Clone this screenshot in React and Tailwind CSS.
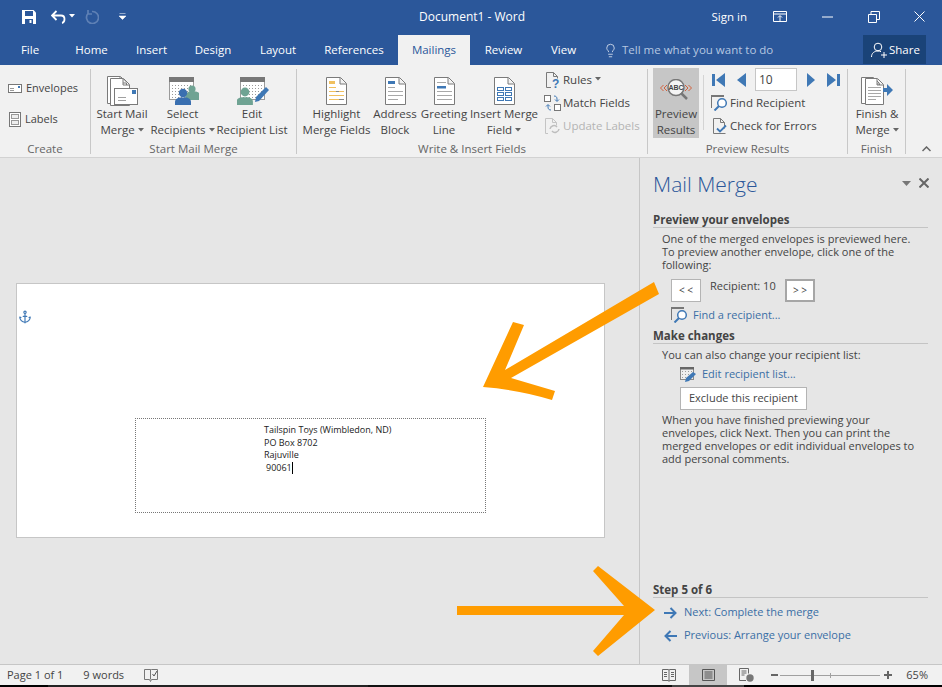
import React from "react";
import { Anchor, Lightbulb } from "lucide-react";

const tabs = [
  ["File", "w-[60px]"],
  ["Home", "w-[63px]"],
  ["Insert", "w-[57px]"],
  ["Design", "w-[66px]"],
  ["Layout", "w-[64px]"],
  ["References", "w-[88px]"],
];

function Caret({ color = "#666" }) {
  return (
    <svg width="6" height="4" viewBox="0 0 6 4" className="inline-block ml-[3px] mb-[2px]">
      <path d="M0 0h6L3 3.5z" fill={color} />
    </svg>
  );
}

// page outline with a folded corner, shared by most ribbon icons
function Page({ x = 0, y = 0, w = 20, h = 27, stroke = "#7a7a7a", fill = "#fff" }) {
  return (
    <path
      d={`M${x + 0.5} ${y + 0.5}h${w - 7}l6 6v${h - 7}h-${w - 1}z M${x + w - 7} ${y + 1}v6h6`}
      fill={fill}
      stroke={stroke}
    />
  );
}

function Dots({ x, y, cols, rows }) {
  const out = [];
  for (let r = 0; r < rows; r++) {
    for (let c = 0; c < cols; c++) {
      out.push(<rect key={r + "-" + c} x={x + c * 3} y={y + r * 3} width="1" height="1" fill="#9a9a9a" />);
    }
  }
  return out;
}

function Person({ x, y, color, s = 1 }) {
  return (
    <g fill={color}>
      <circle cx={x} cy={y} r={4.2 * s} />
      <path d={`M${x - 8 * s} ${y + 13 * s}v-4c0-3 3-4.500 5-4.500h${6 * s}c2 0 5 1.500 5 4.500v4z`} />
    </g>
  );
}

const StartMailIcon = () => (
  <svg width="31" height="30" viewBox="0 0 31 30">
    <Page x={0} y={0} w={20} h={28} />
    <Page x={3} y={2} w={20} h={28} />
    <rect x="7.500" y="12.500" width="23" height="16" fill="#fff" stroke="#7a7a7a" />
    <rect x="25" y="14" width="4" height="4" fill="#3f78b5" />
    <path d="M11 21.500h8M11 24.500h8" stroke="#a0a0a0" />
  </svg>
);

const SelectIcon = () => (
  <svg width="30" height="28" viewBox="0 0 30 28" className="ml-[3px]">
    <rect x="0.500" y="0.500" width="24" height="22" fill="#fff" stroke="#9a9a9a" />
    <rect x="0" y="0" width="25" height="5" fill="#777" />
    <Dots x={3} y={8} cols={7} rows={5} />
    <Person x={23} y={12} color="#6fa393" s={0.85} />
    <Person x={14} y={16} color="#3a6fb0" />
  </svg>
);

const EditListIcon = () => (
  <svg width="33" height="28" viewBox="0 0 33 28" className="ml-[2px]">
    <rect x="3.500" y="0.500" width="24" height="22" fill="#fff" stroke="#9a9a9a" />
    <rect x="3" y="0" width="25" height="5" fill="#777" />
    <Dots x={6} y={8} cols={7} rows={5} />
    <Person x={8} y={15} color="#6fa393" s={1.05} />
    <path d="M18 25l1-5L29 10l3 3L22 24z" fill="#3f78b5" />
  </svg>
);

const HighlightIcon = () => (
  <svg width="21" height="28" viewBox="0 0 21 28">
    <Page w={21} h={28} />
    <rect x="3" y="4" width="6" height="3" fill="#f0c060" />
    <path d="M3 10.500h7" stroke="#f0c060" />
    <path d="M3 14.500h5M8 14.500h10" stroke="#f0c060" />
    <path d="M3 18.500h15" stroke="#f0c060" />
    <path d="M3 22.500h10" stroke="#f0c060" />
    <path d="M13 22.500h5M10 14.500h3" stroke="#888" />
  </svg>
);

const AddressIcon = () => (
  <svg width="21" height="28" viewBox="0 0 21 28">
    <Page w={21} h={28} />
    <rect x="3" y="4" width="7" height="3" fill="#3f78b5" />
    <path d="M3 10.500h7M3 14.500h15M3 18.500h15M3 22.500h10" stroke="#a8a8a8" />
  </svg>
);

const GreetingIcon = () => (
  <svg width="21" height="28" viewBox="0 0 21 28">
    <Page w={21} h={28} />
    <path d="M3 5.500h9M3 14.500h15M3 18.500h15M3 22.500h15" stroke="#a8a8a8" />
    <rect x="3" y="9" width="9" height="2.500" fill="#3f78b5" />
  </svg>
);

const InsertFieldIcon = () => (
  <svg width="21" height="28" viewBox="0 0 21 28">
    <Page w={21} h={28} />
    <g fill="none" stroke="#3f78b5">
      <rect x="3.500" y="10.500" width="6" height="3" />
      <rect x="11.500" y="10.500" width="6" height="3" />
      <rect x="3.500" y="15.500" width="6" height="3" />
      <rect x="11.500" y="15.500" width="6" height="3" />
      <rect x="3.500" y="20.500" width="6" height="3" />
      <rect x="11.500" y="20.500" width="6" height="3" />
    </g>
  </svg>
);

const RulesIcon = () => (
  <svg width="14" height="16" viewBox="0 0 14 16">
    <path d="M5 15.500H0.500V0.500h7l4 4v2M7.500 0.500v4h4" fill="none" stroke="#7a7a7a" />
    <text x="6" y="15.500" fontSize="12" fontWeight="700" fill="#3f78b5" fontFamily="Liberation Sans">?</text>
  </svg>
);

const MatchIcon = () => (
  <svg width="17" height="16" viewBox="0 0 17 16">
    <rect x="0.500" y="0.500" width="6" height="6" fill="#fff" stroke="#777" />
    <rect x="10.500" y="9.500" width="6" height="6" fill="#fff" stroke="#777" />
    <path d="M10 1c2 0 3 1 3 3v2M11 4.500l2 2 2-2" fill="none" stroke="#3f78b5" />
    <path d="M7 15c-2 0-3-1-3-3v-2M2 11.500l2-2 2 2" fill="none" stroke="#3f78b5" />
  </svg>
);

const UpdateIcon = () => (
  <svg width="16" height="16" viewBox="0 0 16 16">
    <path d="M3 15.500H0.500V0.500h7l4 4v3M7.500 0.500v4h4" fill="none" stroke="#c4c4c4" />
    <path d="M5 11a4 4 0 0 1 7-2M14 11a4 4 0 0 1-7 2" fill="none" stroke="#bdbdbd" strokeWidth="1.500" />
  </svg>
);

const PreviewIcon = () => (
  <svg width="32" height="22" viewBox="0 0 32 22">
    <circle cx="16" cy="8.500" r="8" fill="#f4f4f4" stroke="#777" strokeWidth="1.500" />
    <path d="M21 14l6 6" stroke="#777" strokeWidth="2.500" />
    <text x="16" y="11" textAnchor="middle" fontSize="7" fontWeight="700" fill="#444" fontFamily="Liberation Sans">ABC</text>
    <path d="M3.500 6l-3 3 3 3M7 6L4 9l3 3M25 6l3 3-3 3M28.500 6l3 3-3 3" fill="none" stroke="#d2603c" />
  </svg>
);

const FindIcon = () => (
  <svg width="17" height="16" viewBox="0 0 17 16">
    <path d="M0.500 13V1.500h12" fill="none" stroke="#777" />
    <rect x="0" y="0" width="13" height="2" fill="#777" />
    <circle cx="11" cy="8" r="4.300" fill="#fff" stroke="#3f78b5" strokeWidth="1.500" />
    <path d="M8 11l-4.500 4.500" stroke="#3f78b5" strokeWidth="2" />
  </svg>
);

const CheckIcon = () => (
  <svg width="15" height="16" viewBox="0 0 15 16">
    <path d="M0.500 15.500V0.500h7l4 4v6M7.500 0.500v4h4M0.500 15.500h12" fill="none" stroke="#7a7a7a" />
    <path d="M4 10.500l3 3 6-6" fill="none" stroke="#3f78b5" strokeWidth="1.800" />
  </svg>
);

const FinishIcon = () => (
  <svg width="32" height="28" viewBox="0 0 32 28">
    <Page x={0} y={0} w={19} h={27} />
    <Page x={4} y={1} w={19} h={27} />
    <path d="M7 10.500h13M7 13.500h13M7 16.500h13M7 19.500h13M7 22.500h8" stroke="#a8a8a8" />
    <path d="M22 11h4V7l6 6-6 6v-4h-4z" fill="#3f78b5" />
  </svg>
);

const EditSmallIcon = () => (
  <svg width="17" height="15" viewBox="0 0 17 15">
    <rect x="0.500" y="0.500" width="13" height="12" fill="#eee" stroke="#8a8a8a" />
    <rect x="0" y="0" width="14" height="2.500" fill="#666" />
    <Dots x={2} y={4} cols={4} rows={3} />
    <path d="M5 15l1-4 7-6 3 2-7 7z" fill="#3f78b5" />
  </svg>
);

const PaneArrow = ({ back }) => (
  <svg width="13" height="12" viewBox="0 0 13 12" className={back ? "rotate-180" : ""}>
    <path d="M0 6h11M6.500 1L11.500 6 6.500 11" fill="none" stroke="#3f78b5" strokeWidth="2" />
  </svg>
);

function LargeButton({ icon, line1, line2, caret, width, active, top = "pt-[7px]" }) {
  return (
    <div className={`${width} shrink-0 h-[70px] flex flex-col items-center ${top} ${active ? "bg-[#c6c6c6]" : ""}`}>
      <div className="h-[32px] flex items-center justify-center">{icon}</div>
      <div className="mt-auto text-center leading-[16px] whitespace-nowrap">
        <div>{line1}</div>
        <div>
          {line2}
          {caret && <Caret />}
        </div>
      </div>
    </div>
  );
}

function SmallRow({ icon, label, caret, disabled }) {
  return (
    <div className={`h-[23px] flex items-center whitespace-nowrap ${disabled ? "text-[#b4b4b4]" : ""}`}>
      <div className="w-[19px] flex justify-center shrink-0">{icon}</div>
      <span className="ml-[1px]">{label}</span>
      {caret && <Caret />}
    </div>
  );
}

function Group({ label, width, children }) {
  return (
    <div className={`${width} shrink-0 h-[85px] flex flex-col border-r border-[#c8c8c8]`}>
      <div className="flex-1 flex -mt-[1px]">{children}</div>
      <div className="text-center text-[#666] leading-[14px] h-[13px] -mb-[1px] whitespace-nowrap">{label}</div>
    </div>
  );
}

function SectionHead({ children, className = "" }) {
  return (
    <div className={`h-[16px] leading-[15px] border-b border-[#c4c4c4] font-bold text-[#444] text-[11.500px] ${className}`}>
      {children}
    </div>
  );
}

function PaneText({ children, className = "" }) {
  return <div className={`pl-[9px] leading-[13px] text-[#444] ${className}`}>{children}</div>;
}

function NavTriangle({ d, w }) {
  return (
    <svg width={w} height="14" viewBox={`0 0 ${w} 14`} className="shrink-0">
      <path d={d} fill="#3f78b5" />
    </svg>
  );
}

function TitleBar() {
  return (
    <div className="h-[35px] pb-[2px] flex items-center text-white relative shrink-0">
      <div className="flex items-center pl-[22px] gap-[15px]">
        <svg width="14" height="14" viewBox="0 0 14 14">
          <path d="M0 0h11.500L14 2.500V14H0z" fill="#fff" />
          <rect x="3" y="1" width="8" height="5" fill="#2b579a" />
          <rect x="3" y="9" width="8" height="5" fill="#2b579a" />
          <rect x="7.500" y="10" width="2" height="3" fill="#fff" />
        </svg>
        <div className="flex items-center">
          <svg width="15" height="14" viewBox="0 0 15 14">
            <path d="M5.500 1L1 5.500 5.500 10M1.500 5.500H10c5 0 4 7 1 7.500" fill="none" stroke="#fff" strokeWidth="1.800" />
          </svg>
          <Caret color="#fff" />
        </div>
        <svg width="14" height="14" viewBox="0 0 14 14" className="-ml-[5px]">
          <path d="M3 3.500a6 6 0 1 0 4-2M3 0v4h4" fill="none" stroke="#5f81b5" strokeWidth="1.700" />
        </svg>
        <svg width="7" height="7" viewBox="0 0 7 7" className="ml-[5px]">
          <path d="M0.500 0.500h6M0 3h7L3.500 6.500z" fill="#fff" stroke="#fff" strokeWidth="0.500" />
        </svg>
      </div>
      <div className="absolute left-[419px] text-[12px] whitespace-nowrap">Document1 - Word</div>
      <div className="ml-auto flex items-center">
        <span className="text-[11.500px] mr-[26px]">Sign in</span>
        <svg width="14" height="12" viewBox="0 0 14 12" className="mr-[35px]">
          <path d="M0.500 0.500h13v10h-13zM0.500 3h13M7 10V5M5 6.500l2-2 2 2" fill="none" stroke="#fff" />
        </svg>
        <svg width="11" height="2" viewBox="0 0 11 2" className="mr-[35px]">
          <path d="M0 1h11" stroke="#fff" />
        </svg>
        <svg width="12" height="12" viewBox="0 0 12 12" className="mr-[34px]">
          <path d="M0.500 3.500h8v8h-8zM3 3V0.500h8.500v8H9" fill="none" stroke="#fff" />
        </svg>
        <svg width="11" height="11" viewBox="0 0 11 11" className="mr-[17px]">
          <path d="M0.500 0.500l10 10M10.500 0.500l-10 10" stroke="#fff" />
        </svg>
      </div>
    </div>
  );
}

function TabRow() {
  return (
    <div className="h-[30px] flex text-white shrink-0 text-[11.500px]">
      {tabs.map(([name, w]) => (
        <div key={name} className={`${w} flex items-center justify-center`}>{name}</div>
      ))}
      <div className="w-[72px] bg-[#f1f1f1] text-[#2b579a] flex items-center justify-center">Mailings</div>
      <div className="w-[67px] flex items-center justify-center">Review</div>
      <div className="w-[53px] flex items-center justify-center">View</div>
      <div className="flex items-center ml-[13px] text-[#b6c7e1]">
        <Lightbulb size={15} strokeWidth={1.300} color="#dfe6f1" />
        <span className="ml-[4px]">Tell me what you want to do</span>
      </div>
      <div className="ml-auto mr-[16px] w-[63px] h-[29px] bg-[#1a4378] flex items-center pl-[8px]">
        <svg width="16" height="16" viewBox="0 0 16 16">
          <circle cx="7" cy="5" r="3.800" fill="none" stroke="#fff" />
          <path d="M0.500 15c0-4 3-6 6.500-6 1 0 2 .2 3 .7M10 13h6M13 10v6" fill="none" stroke="#fff" />
        </svg>
        <span className="ml-[2px]">Share</span>
      </div>
    </div>
  );
}

function Ribbon() {
  return (
    <div className="h-[93px] bg-[#f1f1f1] border-b border-[#d2d2d2] pt-[4px] flex shrink-0 text-[11.500px] text-[#444] relative">
      <Group label="Create" width="w-[91px]">
        <div className="flex flex-col pt-[9px] pl-[8px] gap-[8px]">
          <div className="h-[23px] flex items-center">
            <svg width="14" height="10" viewBox="0 0 14 10">
              <rect x="0.500" y="0.500" width="13" height="8" fill="#fff" stroke="#777" />
              <rect x="10" y="2" width="2" height="2" fill="#3f78b5" />
              <path d="M2 4.500h4M2 6.500h4" stroke="#999" />
            </svg>
            <span className="ml-[4px] text-[11px]">Envelopes</span>
          </div>
          <div className="h-[23px] flex items-center">
            <svg width="12" height="15" viewBox="0 0 12 15" className="ml-[1px]">
              <rect x="0.500" y="0.500" width="11" height="14" fill="#fff" stroke="#777" />
              <rect x="2.500" y="2.500" width="7" height="4" fill="#eee" stroke="#999" />
              <rect x="2.500" y="8.500" width="7" height="4" fill="#eee" stroke="#999" />
            </svg>
            <span className="ml-[4px] text-[11px]">Labels</span>
          </div>
        </div>
      </Group>
      <Group label="Start Mail Merge" width="w-[206px]">
        <div className="flex pl-[2px]">
          <LargeButton icon={<StartMailIcon />} line1="Start Mail" line2="Merge" caret width="w-[58px]" />
          <LargeButton icon={<SelectIcon />} line1="Select" line2="Recipients" caret width="w-[63px]" />
          <LargeButton icon={<EditListIcon />} line1="Edit" line2="Recipient List" width="w-[76px]" />
        </div>
      </Group>
      <Group label="Write & Insert Fields" width="w-[351px]">
        <div className="flex pl-[5px]">
          <LargeButton icon={<HighlightIcon />} line1="Highlight" line2="Merge Fields" width="w-[69px]" />
          <LargeButton icon={<AddressIcon />} line1="Address" line2="Block" width="w-[48px]" />
          <LargeButton icon={<GreetingIcon />} line1="Greeting" line2="Line" width="w-[50px]" />
          <LargeButton icon={<InsertFieldIcon />} line1="Insert Merge" line2="Field" caret width="w-[70px]" />
          <div className="flex flex-col pl-[4px]">
            <SmallRow icon={<RulesIcon />} label="Rules" caret />
            <SmallRow icon={<MatchIcon />} label="Match Fields" />
            <SmallRow icon={<UpdateIcon />} label="Update Labels" disabled />
          </div>
        </div>
      </Group>
      <Group label="Preview Results" width="w-[200px]">
        <div className="flex pl-[5px]">
          <LargeButton icon={<PreviewIcon />} line1="Preview" line2="Results" width="w-[46px]" active top="pt-[6px]" />
          <div className="w-px h-[55px] bg-[#d4d4d4] ml-[4px] mt-[7px]" />
          <div className="flex flex-col ml-[7px]">
            <div className="h-[23px] flex items-center ml-[1px]">
              <NavTriangle w={13} d="M0 1h3v12H0zM13 0v14L4 7z" />
              <div className="w-[12px]" />
              <NavTriangle w={9} d="M9 0v14L0 7z" />
              <div className="w-[9px] shrink-0" />
              <div className="w-[42px] h-[23px] bg-white border border-[#c6c6c6] pl-[3px] flex items-center text-[12px]">10</div>
              <div className="w-[10px]" />
              <NavTriangle w={8} d="M0 0v14l8-7z" />
              <div className="w-[12px]" />
              <NavTriangle w={13} d="M10 1h3v12h-3zM0 0v14l9-7z" />
            </div>
            <div className="h-[23px] flex items-center">
              <div className="w-[17px] shrink-0 flex"><FindIcon /></div>
              <span className="ml-[2px]">Find Recipient</span>
            </div>
            <div className="h-[23px] flex items-center">
              <div className="w-[17px] shrink-0 flex pl-[2px]"><CheckIcon /></div>
              <span className="ml-[2px]">Check for Errors</span>
            </div>
          </div>
        </div>
      </Group>
      <Group label="Finish" width="w-[58px]">
        <LargeButton icon={<FinishIcon />} line1="Finish &" line2="Merge" caret width="w-[58px]" />
      </Group>
      <svg width="9" height="6" viewBox="0 0 9 6" className="absolute right-[11px] bottom-[5px]">
        <path d="M0.500 5L4.500 1l4 4" fill="none" stroke="#666" strokeWidth="1.500" />
      </svg>
    </div>
  );
}

function Envelope() {
  return (
    <div className="flex-1 pt-[125px] pl-[16px]">
      <div className="w-[589px] h-[255px] bg-white border border-[#c6c6c6] pt-[26px] pl-[1px]">
        <Anchor size={14} color="#3f78b5" strokeWidth={2} />
        <div className="w-[351px] h-[95px] ml-[117px] mt-[94px] border border-dotted border-[#777] pt-[5px] pl-[128px] text-[9px] leading-[12.500px] text-[#222]">
          <div>Tailspin Toys (Wimbledon, ND)</div>
          <div>PO Box 8702</div>
          <div>Rajuville</div>
          <div className="pl-[2px] flex items-center">
            90061
            <span className="inline-block w-px h-[12px] bg-black" />
          </div>
        </div>
      </div>
    </div>
  );
}

function Pane() {
  return (
    <div className="w-[303px] shrink-0 border-l border-[#c6c6c6] pl-[13px] pr-[14px] flex flex-col text-[11px]">
      <div className="flex items-center mt-[13px] h-[26px]">
        <div className="text-[21px] font-light text-[#2b579a] leading-[26px]">Mail Merge</div>
        <svg width="9" height="5" viewBox="0 0 9 5" className="ml-auto mb-[2px]">
          <path d="M0 0h9L4.500 5z" fill="#777" />
        </svg>
        <svg width="10" height="10" viewBox="0 0 10 10" className="ml-[8px] mb-[3px] -mr-[1px]">
          <path d="M0.500 0.500l9 9M9.500 0.500l-9 9" stroke="#666" strokeWidth="2" />
        </svg>
      </div>
      <SectionHead className="mt-[15px]">Preview your envelopes</SectionHead>
      <PaneText className="mt-[4px]">
        <div>One of the merged envelopes is previewed here.</div>
        <div>To preview another envelope, click one of the</div>
        <div>following:</div>
      </PaneText>
      <div className="flex mt-[8px] pl-[18px] text-[#444]">
        <div className="w-[30px] h-[23px] bg-white border border-[#b4b4b4] flex items-center justify-center text-[10px]">&lt; &lt;</div>
        <div className="ml-[9px] w-[75px] leading-[14px]">Recipient: 10</div>
        <div className="w-[30px] h-[23px] bg-white border-2 border-[#a6a6a6] flex items-center justify-center text-[10px]">&gt; &gt;</div>
      </div>
      <div className="flex items-center h-[16px] mt-[5px] pl-[18px]">
        <FindIcon />
        <span className="ml-[5px] text-[#3a6ea5]">Find a recipient...</span>
      </div>
      <SectionHead className="mt-[5px]">Make changes</SectionHead>
      <PaneText className="mt-[4px]">You can also change your recipient list:</PaneText>
      <div className="flex items-center h-[15px] mt-[6px] pl-[27px]">
        <EditSmallIcon />
        <span className="ml-[5px] text-[#3a6ea5]">Edit recipient list...</span>
      </div>
      <div className="w-[127px] h-[23px] ml-[27px] mt-[5px] bg-white border border-[#b4b4b4] flex items-center justify-center text-[#444]">
        Exclude this recipient
      </div>
      <PaneText className="mt-[3px]">
        <div>When you have finished previewing your</div>
        <div>envelopes, click Next. Then you can print the</div>
        <div>merged envelopes or edit individual envelopes to</div>
        <div>add personal comments.</div>
      </PaneText>
      <div className="mt-auto pb-[17px]">
        <SectionHead>Step 5 of 6</SectionHead>
        <div className="mt-[3px] h-[23px] flex items-center pl-[11px] text-[#3a6ea5]">
          <PaneArrow />
          <span className="ml-[7px]">Next: Complete the merge</span>
        </div>
        <div className="h-[23px] flex items-center pl-[11px] text-[#3a6ea5]">
          <PaneArrow back />
          <span className="ml-[7px]">Previous: Arrange your envelope</span>
        </div>
      </div>
    </div>
  );
}

function StatusBar() {
  return (
    <div className="h-[21px] bg-[#f1f1f1] border-t border-[#c6c6c6] flex items-center text-[11px] text-[#444] shrink-0">
      <span className="ml-[7px]">Page 1 of 1</span>
      <span className="ml-[20px]">9 words</span>
      <svg width="14" height="14" viewBox="0 0 14 14" className="ml-[20px]">
        <path d="M6.500 1.500H0.500v10h5l1 2 1-2h6v-10h-6zM6.500 1.500v10" fill="none" stroke="#777" />
        <path d="M8.500 6l1.500 2 3-5" fill="none" stroke="#555" />
      </svg>
      <div className="ml-auto flex items-center h-full">
        <svg width="14" height="13" viewBox="0 0 14 13">
          <path d="M0.500 0.500h6l.5 1 .500-1h6v11h-6l-.5 1-.5-1h-6zM7 1.500v10M2 3.500h3M2 5.500h3M2 7.500h3M9 3.500h3M9 5.500h3M9 7.500h3" fill="none" stroke="#666" />
        </svg>
        <div className="w-[38px] h-full bg-[#c6c6c6] ml-[13px] flex items-center justify-center">
          <svg width="13" height="12" viewBox="0 0 13 12">
            <path d="M0.500 0.500h12v11h-12zM2.500 3h8M2.500 5h8M2.500 7h8M2.500 9h8" fill="none" stroke="#555" />
          </svg>
        </div>
        <svg width="15" height="14" viewBox="0 0 15 14" className="ml-[12px]">
          <path d="M7 12.500H0.500v-12h9v5M2.500 3h5M2.500 5h5M2.500 7h3" fill="none" stroke="#666" />
          <circle cx="11" cy="10" r="3.700" fill="#777" />
        </svg>
        <div className="w-[7px] h-[2px] bg-[#666] ml-[17px]" />
        <div className="w-[100px] h-[11px] ml-[2px] flex items-center relative">
          <div className="w-full h-px bg-[#a0a0a0]" />
          <div className="absolute left-[31px] w-[3px] h-[11px] bg-[#666]" />
          <div className="absolute left-[50px] w-px h-[5px] bg-[#a0a0a0]" />
        </div>
        <svg width="8" height="8" viewBox="0 0 8 8" className="ml-[4px]">
          <path d="M0 4h8M4 0v8" stroke="#666" strokeWidth="2" />
        </svg>
        <span className="ml-[14px] mr-[14px]">65%</span>
      </div>
    </div>
  );
}

export default function App() {
  return (
    <div className="w-[942px] h-[687px] flex flex-col relative overflow-hidden bg-[#2b579a] font-['Open_Sans','Liberation_Sans',sans-serif]">
      <TitleBar />
      <TabRow />
      <Ribbon />
      <div className="flex-1 flex bg-[#e6e6e6] min-h-0">
        <Envelope />
        <Pane />
      </div>
      <StatusBar />
      <div className="h-[2px] bg-black shrink-0 flex">
        <div className="w-[48px]" />
        <div className="w-[320px] bg-[#222]" />
        <div className="w-[304px] bg-[#111]" />
        <div className="w-[72px] bg-[#444]" />
      </div>
      {/* orange callout arrows drawn over the window */}
      <svg width="942" height="687" viewBox="0 0 942 687" className="absolute left-0 top-0 pointer-events-none">
        <path
          d="M483 387L513 322L524 325L505 370L654 282L659 294L511 378L555 391L552 400Q520 390 483 387z"
          fill="#ff9c00"
        />
        <path d="M457 606H624L593 571L598 566L655 610L598 656L593 651L624 615H457z" fill="#ff9c00" />
      </svg>
    </div>
  );
}
